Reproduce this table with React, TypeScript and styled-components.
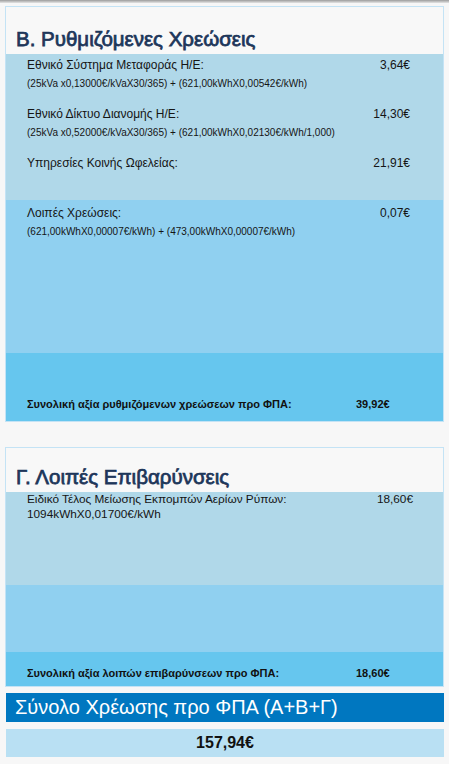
import React from "react";
import styled, { createGlobalStyle } from "styled-components";

const Global = createGlobalStyle`
  html, body { margin: 0; padding: 0; background: #f7f7f7; }
  body { font-family: "Liberation Sans", Arial, sans-serif; color: #111; }
`;

const Page = styled.div`
  width: 449px;
  min-height: 764px;
  background: #f7f7f7;
  display: flex;
  flex-direction: column;
`;

const TopShade = styled.div`
  height: 3px;
  background: linear-gradient(#9c9c9c, #e4e4e4);
`;

const Content = styled.div`
  padding: 3px 5px 0 5px;
  display: flex;
  flex-direction: column;
`;

const Card = styled.section<{ $gapAfter: number }>`
  border: 1px solid #c4e3f5;
  margin-bottom: ${(p) => p.$gapAfter}px;
  display: flex;
  flex-direction: column;
`;

const Header = styled.div<{ $h: number }>`
  height: ${(p) => p.$h}px;
  background: #f8f8f8;
  display: flex;
  align-items: flex-end;
  padding: 0 0 4px 10px;
  box-sizing: border-box;
`;

const Title = styled.h2`
  margin: 0;
  font-size: 20.5px;
  line-height: 22px;
  font-weight: normal;
  color: #1d365a;
  -webkit-text-stroke: 0.75px #1d365a;
`;

const Band = styled.div<{ $h: number; $tone: "light" | "mid" | "dark"; $pt: number }>`
  height: ${(p) => p.$h}px;
  box-sizing: border-box;
  padding-top: ${(p) => p.$pt}px;
  background: ${(p) =>
    p.$tone === "light" ? "#b0d8e9" : p.$tone === "mid" ? "#90d0f0" : "#66c6ee"};
  display: flex;
  flex-direction: column;
`;

const Item = styled.div<{ $pr: number }>`
  padding: 0 ${(p) => p.$pr}px 0 21px;
  margin-bottom: 10px;
`;

const LabelRow = styled.div<{ $lh: number; $fs: number }>`
  display: flex;
  justify-content: space-between;
  font-size: ${(p) => p.$fs}px;
  line-height: ${(p) => p.$lh}px;
  color: #151515;
`;

const Formula = styled.div`
  font-size: 10px;
  line-height: 20px;
  margin-top: -1px;
  color: #151515;
`;

const SubLine = styled.div`
  font-size: 11.8px;
  line-height: 15px;
  color: #151515;
`;

const TotalRow = styled.div`
  display: flex;
  padding-left: 21px;
  font-size: 11px;
  font-weight: bold;
  line-height: 20px;
  color: #111;
`;

const TotalLabel = styled.span`
  width: 329px;
`;

const GrandBar = styled.div`
  margin-left: 1px;
  height: 29px;
  background: #0077c0;
  color: #fff;
  font-size: 20px;
  line-height: 29px;
  padding-left: 9px;
  margin-bottom: 7px;
`;

const GrandValue = styled.div`
  margin-left: 1px;
  height: 28px;
  background: #b9e0f3;
  font-size: 16px;
  font-weight: bold;
  line-height: 28px;
  text-align: center;
  color: #111;
`;

type Charge = { label: string; value: string; formula?: string };

const lightB: Charge[] = [
  {
    label: "Εθνικό Σύστημα Μεταφοράς Η/Ε:",
    value: "3,64€",
    formula: "(25kVa x0,13000€/kVaX30/365) + (621,00kWhX0,00542€/kWh)",
  },
  {
    label: "Εθνικό Δίκτυο Διανομής Η/Ε:",
    value: "14,30€",
    formula: "(25kVa x0,52000€/kVaX30/365) + (621,00kWhX0,02130€/kWh/1,000)",
  },
  { label: "Υπηρεσίες Κοινής Ωφελείας:", value: "21,91€" },
];

const midB: Charge[] = [
  {
    label: "Λοιπές Χρεώσεις:",
    value: "0,07€",
    formula: "(621,00kWhX0,00007€/kWh) + (473,00kWhX0,00007€/kWh)",
  },
];

function ChargeItem({ c }: { c: Charge }) {
  return (
    <Item $pr={33}>
      <LabelRow $lh={20} $fs={12}>
        <span>{c.label}</span>
        <span>{c.value}</span>
      </LabelRow>
      {c.formula && <Formula>{c.formula}</Formula>}
    </Item>
  );
}

export default function App() {
  return (
    <>
      <Global />
      <Page>
        <TopShade />
        <Content>
          <Card $gapAfter={25}>
            <Header $h={47}>
              <Title>Β. Ρυθμιζόμενες Χρεώσεις</Title>
            </Header>
            <Band $h={146} $tone="light" $pt={1}>
              {lightB.map((c) => (
                <ChargeItem key={c.label} c={c} />
              ))}
            </Band>
            <Band $h={153} $tone="mid" $pt={3}>
              {midB.map((c) => (
                <ChargeItem key={c.label} c={c} />
              ))}
            </Band>
            <Band $h={68} $tone="dark" $pt={41}>
              <TotalRow>
                <TotalLabel>Συνολική αξία ρυθμιζόμενων χρεώσεων προ ΦΠΑ:</TotalLabel>
                <span>39,92€</span>
              </TotalRow>
            </Band>
          </Card>

          <Card $gapAfter={6}>
            <Header $h={44}>
              <Title>Γ. Λοιπές Επιβαρύνσεις</Title>
            </Header>
            <Band $h={93} $tone="light" $pt={0}>
              <Item $pr={30}>
                <LabelRow $lh={15} $fs={11.8}>
                  <span>Ειδικό Τέλος Μείωσης Εκπομπών Αερίων Ρύπων:</span>
                  <span>18,60€</span>
                </LabelRow>
                <SubLine>1094kWhX0,01700€/kWh</SubLine>
              </Item>
            </Band>
            <Band $h={67} $tone="mid" $pt={0} />
            <Band $h={34} $tone="dark" $pt={11}>
              <TotalRow>
                <TotalLabel>Συνολική αξία λοιπών επιβαρύνσεων προ ΦΠΑ:</TotalLabel>
                <span>18,60€</span>
              </TotalRow>
            </Band>
          </Card>

          <GrandBar>Σύνολο Χρέωσης προ ΦΠΑ (Α+Β+Γ)</GrandBar>
          <GrandValue>157,94€</GrandValue>
        </Content>
      </Page>
    </>
  );
}
